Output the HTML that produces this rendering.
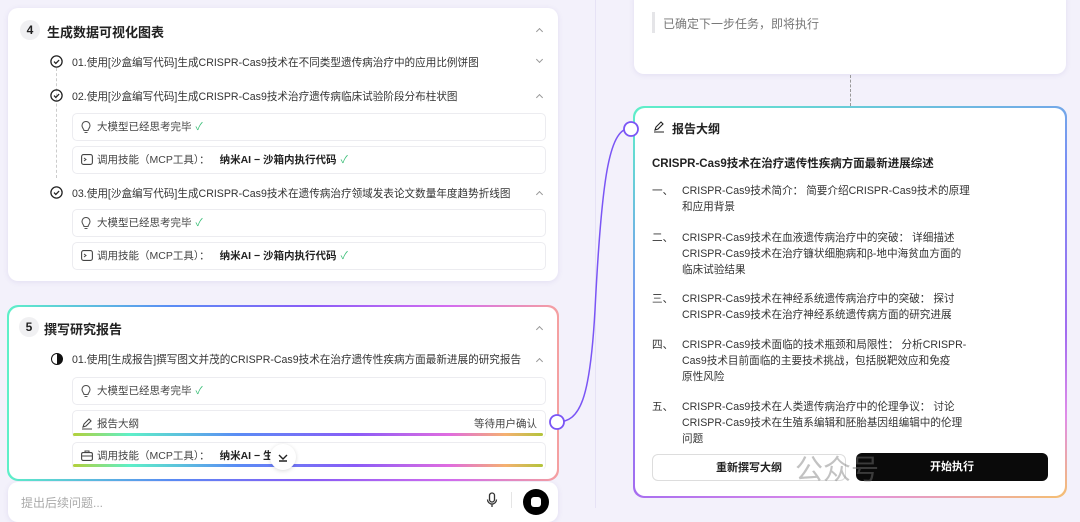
<!DOCTYPE html>
<html><head><meta charset="utf-8"><style>
*{box-sizing:border-box;margin:0;padding:0}
body{width:1080px;height:508px;overflow:hidden;position:relative;background:#f3f1fb;font-family:"Liberation Sans","Noto Sans CJK SC",sans-serif;color:#222}
.abs{position:absolute}
.card{position:absolute;background:#fff;border-radius:10px;box-shadow:0 1px 6px rgba(80,60,160,.10)}
.num{position:absolute;width:20px;height:20px;border-radius:50%;background:#f0f0f2;font-size:12px;font-weight:bold;text-align:center;line-height:20px}
.h{position:absolute;font-size:13px;font-weight:bold}
.t{position:absolute;font-size:10.6px;color:#333;white-space:nowrap}
.box{position:absolute;left:72px;width:474px;height:28px;border:1px solid #ececf0;border-radius:5px;font-size:10.5px;color:#444;line-height:26px;padding-left:24px;white-space:nowrap}
.box svg{position:absolute;left:8px;top:7px}
.chev{position:absolute;width:5px;height:5px;border-left:1.2px solid #999;border-top:1.2px solid #999;transform:rotate(45deg)}
.chev.d{transform:rotate(225deg)}
.ck{color:#3cbf78;margin-left:4px}
.b{font-weight:bold;color:#222;margin-left:10px}
.grad{position:absolute;border-radius:11px;background:linear-gradient(90deg,#5ef0c8,#5a8cf5 30%,#8a5cf7 55%,#d36cf0 80%,#f5a0a0)}
.li{position:absolute;left:652px;font-size:10.6px;color:#333;line-height:16px;white-space:nowrap}
.li span{position:absolute;left:0}
.li div{margin-left:30px}
.ci{position:absolute;left:50px}
</style></head><body>
<div class="abs" style="left:595px;top:0;width:1px;height:508px;background:#e6e2f5"></div>

<!-- card 4 -->
<div class="card" style="left:8px;top:8px;width:550px;height:273px"></div>
<div class="num" style="left:20px;top:20px">4</div>
<div class="h" style="left:47px;top:22px">生成数据可视化图表</div>
<div class="chev" style="left:537px;top:29px"></div>
<div class="abs" style="left:56px;top:68px;height:110px;border-left:1px dashed #ccc"></div>
<svg class="ci" style="top:55px" width="13" height="13" viewBox="0 0 13 13"><circle cx="6.5" cy="6.5" r="5.6" fill="none" stroke="#222" stroke-width="1.3"/><path d="M4 6.6l1.8 1.8 3.3-3.3" fill="none" stroke="#222" stroke-width="1.3"/></svg>
<div class="t" style="left:72px;top:55px">01.使用[沙盒编写代码]生成CRISPR-Cas9技术在不同类型遗传病治疗中的应用比例饼图</div>
<div class="chev d" style="left:537px;top:57px"></div>
<svg class="ci" style="top:89px" width="13" height="13" viewBox="0 0 13 13"><circle cx="6.5" cy="6.5" r="5.6" fill="none" stroke="#222" stroke-width="1.3"/><path d="M4 6.6l1.8 1.8 3.3-3.3" fill="none" stroke="#222" stroke-width="1.3"/></svg>
<div class="t" style="left:72px;top:89px">02.使用[沙盒编写代码]生成CRISPR-Cas9技术治疗遗传病临床试验阶段分布柱状图</div>
<div class="chev" style="left:537px;top:95px"></div>
<div class="box" style="top:113px"><svg width="10" height="13" viewBox="0 0 10 13"><path d="M3 9.5C3 8 1 7 1 4.5a4 4 0 018 0C9 7 7 8 7 9.5zM3.5 11.5h3" fill="none" stroke="#555" stroke-width="1.1"/></svg>大模型已经思考完毕<span class="ck">✓</span></div>
<div class="box" style="top:146px"><svg width="12" height="11" viewBox="0 0 12 11"><rect x=".6" y=".6" width="10.8" height="9.8" rx="2" fill="none" stroke="#444" stroke-width="1.1"/><path d="M3 4l2 1.5L3 7" fill="none" stroke="#444" stroke-width="1"/></svg>调用技能（MCP工具）：<span class="b">纳米AI − 沙箱内执行代码</span><span class="ck">✓</span></div>
<svg class="ci" style="top:186px" width="13" height="13" viewBox="0 0 13 13"><circle cx="6.5" cy="6.5" r="5.6" fill="none" stroke="#222" stroke-width="1.3"/><path d="M4 6.6l1.8 1.8 3.3-3.3" fill="none" stroke="#222" stroke-width="1.3"/></svg>
<div class="t" style="left:72px;top:186px">03.使用[沙盒编写代码]生成CRISPR-Cas9技术在遗传病治疗领域发表论文数量年度趋势折线图</div>
<div class="chev" style="left:537px;top:192px"></div>
<div class="box" style="top:209px"><svg width="10" height="13" viewBox="0 0 10 13"><path d="M3 9.5C3 8 1 7 1 4.5a4 4 0 018 0C9 7 7 8 7 9.5zM3.5 11.5h3" fill="none" stroke="#555" stroke-width="1.1"/></svg>大模型已经思考完毕<span class="ck">✓</span></div>
<div class="box" style="top:242px"><svg width="12" height="11" viewBox="0 0 12 11"><rect x=".6" y=".6" width="10.8" height="9.8" rx="2" fill="none" stroke="#444" stroke-width="1.1"/><path d="M3 4l2 1.5L3 7" fill="none" stroke="#444" stroke-width="1"/></svg>调用技能（MCP工具）：<span class="b">纳米AI − 沙箱内执行代码</span><span class="ck">✓</span></div>

<!-- card 5 -->
<div class="grad" style="left:7px;top:305px;width:552px;height:176px"></div>
<div class="card" style="left:9px;top:307px;width:548px;height:172px;box-shadow:none"></div>
<div class="num" style="left:19px;top:317px">5</div>
<div class="h" style="left:44px;top:319px">撰写研究报告</div>
<div class="chev" style="left:537px;top:327px"></div>
<div class="abs" style="left:51px;top:353px;width:12px;height:12px;border-radius:50%;border:1.4px solid #111;background:linear-gradient(90deg,#fff 50%,#111 50%)"></div>
<div class="t" style="left:72px;top:352px">01.使用[生成报告]撰写图文并茂的CRISPR-Cas9技术在治疗遗传性疾病方面最新进展的研究报告</div>
<div class="chev" style="left:537px;top:359px"></div>
<div class="box" style="top:377px"><svg width="10" height="13" viewBox="0 0 10 13"><path d="M3 9.5C3 8 1 7 1 4.5a4 4 0 018 0C9 7 7 8 7 9.5zM3.5 11.5h3" fill="none" stroke="#555" stroke-width="1.1"/></svg>大模型已经思考完毕<span class="ck">✓</span></div>
<div class="box" style="top:410px;border-bottom:none"><svg width="12" height="12" viewBox="0 0 12 12"><path d="M2 9l1-3 5-5 2 2-5 5zM1 11h10" fill="none" stroke="#444" stroke-width="1.1"/></svg>报告大纲<span class="abs" style="right:8px;top:0">等待用户确认</span></div>
<div class="abs" style="left:73px;top:433px;width:470px;height:3px;border-radius:2px;background:linear-gradient(90deg,#b3d03a,#5ef0c8 12%,#5a8cf5 35%,#8a5cf7 60%,#e06ce0 80%,#f5b070 92%,#b3c43a)"></div>
<div class="box" style="top:442px;border-bottom:none"><svg width="12" height="11" viewBox="0 0 12 11"><rect x=".6" y="2.6" width="10.8" height="7.8" rx="1.5" fill="none" stroke="#444" stroke-width="1.1"/><path d="M4 2.6V1h4v1.6M.6 6h10.8" fill="none" stroke="#444" stroke-width="1"/></svg>调用技能（MCP工具）：<span class="b">纳米AI − 生成</span></div>
<div class="abs" style="left:73px;top:464px;width:470px;height:3px;border-radius:2px;background:linear-gradient(90deg,#b3d03a,#5ef0c8 12%,#5a8cf5 35%,#8a5cf7 60%,#e06ce0 80%,#f5b070 92%,#b3c43a)"></div>
<div class="abs" style="left:270px;top:444px;width:26px;height:26px;border-radius:50%;background:#fff;box-shadow:0 1px 4px rgba(0,0,0,.15)"><svg width="26" height="26" viewBox="0 0 26 26"><path d="M9 11l4 4 4-4M9 17h8" fill="none" stroke="#222" stroke-width="1.4"/></svg></div>

<!-- input -->
<div class="card" style="left:8px;top:482px;width:550px;height:40px"></div>
<div class="t" style="left:21px;top:494px;color:#aaa;font-size:12px">提出后续问题...</div>
<svg class="abs" style="left:486px;top:492px" width="12" height="16" viewBox="0 0 12 16"><rect x="3.5" y="1" width="5" height="9" rx="2.5" fill="none" stroke="#333" stroke-width="1.3"/><path d="M1.5 7.5a4.5 4.5 0 009 0M6 12v3" fill="none" stroke="#333" stroke-width="1.3"/></svg>
<div class="abs" style="left:511px;top:492px;width:1px;height:16px;background:#e5e5e5"></div>
<div class="abs" style="left:523px;top:489px;width:26px;height:26px;border-radius:50%;background:#000"></div>
<div class="abs" style="left:531px;top:497px;width:10px;height:10px;border-radius:3px;background:#fff"></div>

<!-- connector -->
<svg class="abs" style="left:540px;top:110px" width="110" height="330"><path d="M17 312 C40 312,50 290,55 200 C62 60,70 18,91 18" fill="none" stroke="#7a55f5" stroke-width="1.5"/><circle cx="17" cy="312" r="7" fill="#fff" stroke="#7a55f5" stroke-width="1.8"/></svg>

<!-- right top -->
<div class="card" style="left:634px;top:-10px;width:432px;height:84px"></div>
<div class="abs" style="left:652px;top:12px;width:3px;height:21px;background:#e5e5e8"></div>
<div class="t" style="left:663px;top:15px;color:#777;font-size:12px">已确定下一步任务，即将执行</div>
<div class="abs" style="left:850px;top:75px;height:31px;border-left:1px dashed #999"></div>

<!-- report card -->
<div class="grad" style="left:633px;top:106px;width:434px;height:392px;background:linear-gradient(160deg,#5ef0c8,#7a8cf5 40%,#a36cf0 70%,#e08ce8 85%,#f5c070)"></div>
<div class="card" style="left:635px;top:108px;width:430px;height:388px;box-shadow:none"></div>
<svg class="abs" style="left:623px;top:121px" width="16" height="16"><circle cx="8" cy="8" r="7" fill="#fff" stroke="#7a55f5" stroke-width="1.8"/></svg>
<svg class="abs" style="left:653px;top:121px" width="12" height="12" viewBox="0 0 12 12"><path d="M2 9l1-3 5-5 2 2-5 5zM1 11h10" fill="none" stroke="#222" stroke-width="1.1"/></svg>
<div class="h" style="left:672px;top:120px;font-size:12px">报告大纲</div>
<div class="h" style="left:652px;top:155px;font-size:11.5px">CRISPR-Cas9技术在治疗遗传性疾病方面最新进展综述</div>
<div class="li" style="top:183px"><span>一、</span><div>CRISPR-Cas9技术简介：  简要介绍CRISPR-Cas9技术的原理<br>和应用背景</div></div>
<div class="li" style="top:230px"><span>二、</span><div>CRISPR-Cas9技术在血液遗传病治疗中的突破：  详细描述<br>CRISPR-Cas9技术在治疗镰状细胞病和β-地中海贫血方面的<br>临床试验结果</div></div>
<div class="li" style="top:291px"><span>三、</span><div>CRISPR-Cas9技术在神经系统遗传病治疗中的突破：  探讨<br>CRISPR-Cas9技术在治疗神经系统遗传病方面的研究进展</div></div>
<div class="li" style="top:337px"><span>四、</span><div>CRISPR-Cas9技术面临的技术瓶颈和局限性：  分析CRISPR-<br>Cas9技术目前面临的主要技术挑战，包括脱靶效应和免疫<br>原性风险</div></div>
<div class="li" style="top:399px"><span>五、</span><div>CRISPR-Cas9技术在人类遗传病治疗中的伦理争议：  讨论<br>CRISPR-Cas9技术在生殖系编辑和胚胎基因组编辑中的伦理<br>问题</div></div>
<div class="abs" style="left:652px;top:454px;width:194px;height:27px;border:1px solid #ddd;border-radius:6px;text-align:center;line-height:26px;font-size:11px;font-weight:bold">重新撰写大纲</div>
<div class="abs" style="left:856px;top:453px;width:192px;height:28px;background:#0a0a0a;border-radius:6px;text-align:center;line-height:28px;font-size:11px;font-weight:bold;color:#fff">开始执行</div>
<div class="t" style="left:795px;top:448px;font-size:28px;color:rgba(120,120,120,.45)">公众号</div>
</body></html>
